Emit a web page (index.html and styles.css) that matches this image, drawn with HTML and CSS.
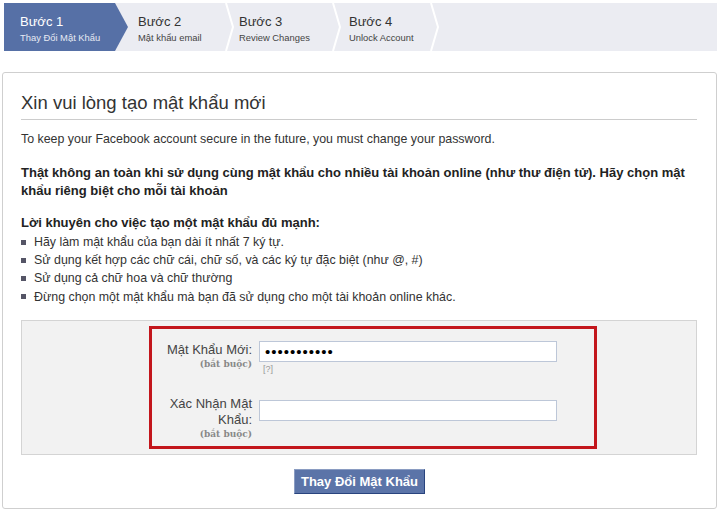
FILE: index.html
```html
<!DOCTYPE html>
<html lang="vi">
<head>
  <meta charset="UTF-8" />
  <title>Thay Đổi Mật Khẩu</title>
  <link rel="stylesheet" href="styles.css">
</head>
<body>

  <!-- các bước -->
  <div class="steps">
    <div class="step step-active">
      <div class="step-title">Bước 1</div>
      <div class="step-sub">Thay Đổi Mật Khẩu</div>
    </div>
    <div class="step step-2">
      <div class="step-title">Bước 2</div>
      <div class="step-sub">Mật khẩu email</div>
    </div>
    <svg class="sep" viewBox="0 0 10 48"><polyline points="1,0 8,24 1,48"/></svg>
    <div class="step step-3">
      <div class="step-title">Bước 3</div>
      <div class="step-sub">Review Changes</div>
    </div>
    <svg class="sep" viewBox="0 0 10 48"><polyline points="1,0 8,24 1,48"/></svg>
    <div class="step step-4">
      <div class="step-title">Bước 4</div>
      <div class="step-sub">Unlock Account</div>
    </div>
    <svg class="sep" viewBox="0 0 10 48"><polyline points="1,0 8,24 1,48"/></svg>
  </div>

  <!-- nội dung -->
  <div class="card">
    <h2 class="card-title">Xin vui lòng tạo mật khẩu mới</h2>
    <p class="intro">To keep your Facebook account secure in the future, you must change your password.</p>
    <p class="warn">Thật không an toàn khi sử dụng cùng mật khẩu cho nhiều tài khoản online (như thư điện tử). Hãy chọn mật khẩu riêng biệt cho mỗi tài khoản</p>

    <div class="tips-head">Lời khuyên cho việc tạo một mật khẩu đủ mạnh:</div>
    <ul class="tips">
      <li>Hãy làm mật khẩu của bạn dài ít nhất 7 ký tự.</li>
      <li>Sử dụng kết hợp các chữ cái, chữ số, và các ký tự đặc biệt (như @, #)</li>
      <li>Sử dụng cả chữ hoa và chữ thường</li>
      <li>Đừng chọn một mật khẩu mà bạn đã sử dụng cho một tài khoản online khác.</li>
    </ul>

    <div class="form-box">
      <div class="highlight">
        <div class="row">
          <div class="label">
            <div class="label-main">Mật Khẩu Mới:</div>
            <div class="label-req">(bắt buộc)</div>
          </div>
          <div class="field">
            <input class="input" type="password" value="abcdefghijk">
            <div class="help">[?]</div>
          </div>
        </div>
        <div class="row row-2">
          <div class="label">
            <div class="label-main">Xác Nhận Mật<br>Khẩu:</div>
            <div class="label-req">(bắt buộc)</div>
          </div>
          <div class="field">
            <input class="input input-confirm" type="password" value="">
          </div>
        </div>
      </div>
    </div>

    <div class="actions">
      <button class="btn-submit">Thay Đổi Mật Khẩu</button>
    </div>
  </div>

</body>
</html>
```

FILE: styles.css
```css
/* trang */
body {
  margin: 0;
  padding: 2px 3px 0 2px;
  font-family: "Liberation Sans", "DejaVu Sans", sans-serif;
  color: #333;
  background: #fff;
}

/* thanh các bước */
.steps {
  display: flex;
  height: 48px;
  margin: 1px 0 0 2px;
  background: #ebecf2;
}
.step {
  box-sizing: border-box;
  padding-top: 11px;
  color: #333;
}
.step-title {
  font-size: 13px;
  line-height: 16px;
}
.step-sub {
  font-size: 9.4px;
  line-height: 15px;
  color: #444;
}
.step-active {
  width: 124px;
  padding-left: 16px;
  background: #5670a6;
  color: #fff;
  clip-path: polygon(0 0, 111px 0, 124px 50%, 111px 100%, 0 100%);
}
.step-active .step-sub {
  color: #e6eaf3;
}
.step-2 { width: 97px; padding-left: 10px; }
.step-3 { width: 97px; padding-left: 4px; }
.step-4 { width: 88px; padding-left: 7px; }

.sep {
  width: 10px;
  height: 48px;
  flex: none;
}
.sep polyline {
  fill: none;
  stroke: #fff;
  stroke-width: 2;
}

/* khung nội dung */
.card {
  margin-top: 21px;
  padding: 0 19px 0 18px;
  height: 435px;
  border: 1px solid #cfcfcf;
  border-radius: 3px;
}
.card-title {
  margin: 0;
  padding: 20px 0 6px;
  font-size: 18.5px;
  font-weight: normal;
  line-height: 20px;
  color: #333;
  border-bottom: 1px solid #ccc;
}
.intro {
  margin: 11px 0 0;
  font-size: 12.4px;
  line-height: 16px;
}
.warn {
  margin: 17px 0 0;
  font-size: 13px;
  font-weight: bold;
  line-height: 18px;
  color: #222;
}
.tips-head {
  margin-top: 14px;
  font-size: 13px;
  font-weight: bold;
  line-height: 18px;
  color: #222;
}
.tips {
  margin: 1px 0 0;
  padding: 0;
  list-style: none;
  font-size: 12.4px;
  line-height: 18.2px;
}
.tips li {
  display: flex;
  align-items: center;
  gap: 8px;
}
.tips li::before {
  content: "";
  width: 5px;
  height: 5px;
  background: #556;
  flex: none;
}

/* khung nhập mật khẩu */
.form-box {
  margin-top: 14px;
  height: 123px;
  padding: 5px 0 5px 127px;
  background: #f2f2f2;
  border: 1px solid #d4d4d4;
}
.highlight {
  box-sizing: border-box;
  width: 448px;
  height: 123px;
  padding: 12px 0 0;
  border: 3px solid #c3161c;
}
.row {
  display: flex;
  gap: 7px;
}
.row-2 {
  margin-top: 20px;
}
.label {
  width: 100px;
  text-align: right;
}
.label-main {
  font-size: 13px;
  line-height: 16px;
  color: #444;
  padding-top: 1px;
}
.label-req {
  font-size: 9px;
  line-height: 13px;
  color: #888;
  font-family: "DejaVu Serif", serif;
  font-weight: bold;
}
.field {
  width: 298px;
}
.input {
  box-sizing: border-box;
  width: 298px;
  height: 21px;
  margin: 0;
  padding: 0 5px;
  border: 1px solid #bdc7d8;
  background: #fff;
  color: #000;
  font-size: 15px;
  letter-spacing: 1px;
  font-family: inherit;
}
.input-confirm {
  margin-top: 5px;
}
.help {
  margin: 1px 0 0 4px;
  font-size: 9px;
  line-height: 12px;
  color: #999;
}

/* nút */
.actions {
  display: flex;
  justify-content: center;
  padding: 14px 0 0 1px;
}
.btn-submit {
  height: 25px;
  padding: 0 6px;
  background: #5b74a8;
  border: 1px solid #3b5998;
  border-color: #8a9cc2 #29447e #29447e #8a9cc2;
  color: #fff;
  font-family: "Liberation Sans", sans-serif;
  font-size: 13px;
  font-weight: bold;
}
```
